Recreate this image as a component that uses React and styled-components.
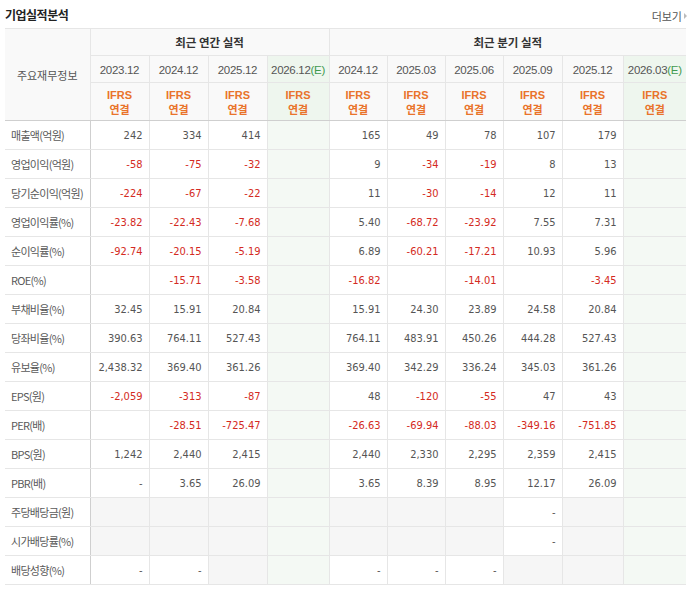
import React from "react";
import styled, { createGlobalStyle, css } from "styled-components";

const Global = createGlobalStyle`
  html, body { margin: 0; padding: 0; background: #fff; }
  body { font-family: "Noto Sans CJK KR", "Liberation Sans", sans-serif; color: #555; }
`;

const Wrap = styled.div`
  width: 696px;
  padding: 0 0 0 5px;
  box-sizing: border-box;
`;

const TitleBar = styled.div`
  display: flex;
  align-items: center;
  justify-content: space-between;
  height: 28px;
  width: 681px;
`;

const Title = styled.h3`
  margin: 0;
  font-size: 12px;
  font-weight: 700;
  color: #222;
  letter-spacing: -0.5px;
`;

const More = styled.a`
  display: flex;
  align-items: center;
  gap: 2px;
  font-size: 11px;
  color: #555;
  text-decoration: none;
  margin-right: -1px;
  margin-top: 3px;
`;

const Arrow = styled.span`
  width: 0;
  height: 0;
  border-left: 3px solid #bbb;
  border-top: 3px solid transparent;
  border-bottom: 3px solid transparent;
`;

const Table = styled.table`
  border-collapse: collapse;
  table-layout: fixed;
  width: 681px;
  border-top: 1px solid #b8b8b8;
  border-bottom: 1px solid #c8c8c8;
`;

const estBg = "#f4f9f4";
const estHeadBg = "#eef6ee";

const HeadCell = styled.th`
  background: ${(p) => (p.$est ? estHeadBg : "#f9f9f9")};
  border: 1px solid #e6e6e6;
  border-left-color: ${(p) => (p.$strongLeft ? "#cfcfcf" : "#e6e6e6")};
  border-bottom-color: ${(p) => (p.$bottomStrong ? "#cfcfcf" : "#e6e6e6")};
  font-weight: ${(p) => (p.$bold ? 700 : 400)};
  font-size: ${(p) => (p.$bold ? "11.5px" : "11px")};
  color: ${(p) => (p.$bold ? "#333" : "#555")};
  text-align: center;
  padding: 0;
  height: ${(p) => p.$h}px;
  &:first-child { border-left: none; }
  &:last-child { border-right: none; }
`;

const DateText = styled.span`
  font-family: "Liberation Sans", sans-serif;
  font-size: 11.5px;
  color: #555;
  letter-spacing: -0.3px;
`;

const Est = styled.span`
  color: #3f9a4f;
`;

const IfrsLine = styled.div`
  font-family: ${(p) =>
    p.$latin ? `"Liberation Sans", sans-serif` : `"Noto Sans CJK KR", "Liberation Sans", sans-serif`};
  font-size: 11px;
  line-height: 14px;
  height: 14px;
  font-weight: 700;
  color: #e9732a;
`;

const Row = styled.tr`
  ${(p) =>
    p.$sep &&
    css`
      & > td { border-top: 1px solid #c8c8c8; }
    `}
`;

const Label = styled.td`
  border-bottom: 1px solid #e6e6e6;
  border-right: 1px solid #cfcfcf;
  height: 28px;
  padding: 0 0 0 6px;
  font-size: 11px;
  color: #5a5a5a;
  white-space: nowrap;
  letter-spacing: -0.7px;
`;

const Cell = styled.td`
  border: 1px solid #e6e6e6;
  border-left-color: ${(p) => (p.$strongLeft ? "#cfcfcf" : "#e6e6e6")};
  background: ${(p) => (p.$est ? estBg : p.$empty ? "#f6f6f6" : "#fff")};
  height: 28px;
  padding: 0 6px 0 0;
  text-align: right;
  font-family: "DejaVu Sans Condensed", "DejaVu Sans", sans-serif;
  font-size: 11px;
  color: ${(p) => (p.$neg ? "#d42a22" : "#555")};
  white-space: nowrap;
  &:last-child { border-right: none; }
`;

const annual = [
  { d: "2023.12" },
  { d: "2024.12" },
  { d: "2025.12" },
  { d: "2026.12", e: true },
];
const quarter = [
  { d: "2024.12" },
  { d: "2025.03" },
  { d: "2025.06" },
  { d: "2025.09" },
  { d: "2025.12" },
  { d: "2026.03", e: true },
];

const widths = [85, 59, 59, 59, 62, 58, 58, 58, 59, 61, 63];

const G = null; // no-data (gray)

const rows = [
  ["매출액(억원)", ["242", "334", "414"], ["165", "49", "78", "107", "179"]],
  ["영업이익(억원)", ["-58", "-75", "-32"], ["9", "-34", "-19", "8", "13"]],
  ["당기순이익(억원)", ["-224", "-67", "-22"], ["11", "-30", "-14", "12", "11"]],
  ["영업이익률(%)", ["-23.82", "-22.43", "-7.68"], ["5.40", "-68.72", "-23.92", "7.55", "7.31"], true],
  ["순이익률(%)", ["-92.74", "-20.15", "-5.19"], ["6.89", "-60.21", "-17.21", "10.93", "5.96"]],
  ["ROE(%)", ["", "-15.71", "-3.58"], ["-16.82", "", "-14.01", "", "-3.45"]],
  ["부채비율(%)", ["32.45", "15.91", "20.84"], ["15.91", "24.30", "23.89", "24.58", "20.84"], true],
  ["당좌비율(%)", ["390.63", "764.11", "527.43"], ["764.11", "483.91", "450.26", "444.28", "527.43"]],
  ["유보율(%)", ["2,438.32", "369.40", "361.26"], ["369.40", "342.29", "336.24", "345.03", "361.26"]],
  ["EPS(원)", ["-2,059", "-313", "-87"], ["48", "-120", "-55", "47", "43"], true],
  ["PER(배)", ["", "-28.51", "-725.47"], ["-26.63", "-69.94", "-88.03", "-349.16", "-751.85"]],
  ["BPS(원)", ["1,242", "2,440", "2,415"], ["2,440", "2,330", "2,295", "2,359", "2,415"]],
  ["PBR(배)", ["-", "3.65", "26.09"], ["3.65", "8.39", "8.95", "12.17", "26.09"]],
  ["주당배당금(원)", [G, G, G], [G, G, G, "-", G], true],
  ["시가배당률(%)", [G, G, G], [G, G, G, "-", G]],
  ["배당성향(%)", ["-", "-", G], ["-", "-", "-", G, G]],
];

function Value({ v, strongLeft, est }) {
  const empty = v === null;
  const neg = typeof v === "string" && v.startsWith("-") && v.length > 1;
  return (
    <Cell $strongLeft={strongLeft} $est={est} $empty={empty} $neg={neg}>
      {empty ? "" : v}
    </Cell>
  );
}

function DateHead({ d, e, strongLeft }) {
  return (
    <HeadCell $h={26} $est={e} $strongLeft={strongLeft}>
      <DateText>
        {d}
        {e && <Est>(E)</Est>}
      </DateText>
    </HeadCell>
  );
}

export default function App() {
  const cols = [...annual, ...quarter];
  return (
    <>
      <Global />
      <Wrap>
        <TitleBar>
          <Title>기업실적분석</Title>
          <More href="#">
            더보기
            <Arrow />
          </More>
        </TitleBar>
        <Table>
          <colgroup>
            {widths.map((w, i) => (
              <col key={i} style={{ width: w }} />
            ))}
          </colgroup>
          <thead>
            <tr>
              <HeadCell rowSpan={3} $h={26} $bottomStrong>
                주요재무정보
              </HeadCell>
              <HeadCell colSpan={4} $bold $h={26} $strongLeft>
                최근 연간 실적
              </HeadCell>
              <HeadCell colSpan={6} $bold $h={26} $strongLeft>
                최근 분기 실적
              </HeadCell>
            </tr>
            <tr>
              {cols.map((c, i) => (
                <DateHead key={i} d={c.d} e={c.e} strongLeft={i === 0 || i === 4} />
              ))}
            </tr>
            <tr>
              {cols.map((c, i) => (
                <HeadCell
                  key={i}
                  $h={37}
                  $est={c.e}
                  $strongLeft={i === 0 || i === 4}
                  $bottomStrong
                >
                  <IfrsLine $latin>IFRS</IfrsLine>
                  <IfrsLine>연결</IfrsLine>
                </HeadCell>
              ))}
            </tr>
          </thead>
          <tbody>
            {rows.map(([label, a, q, sep], r) => (
              <Row key={r} $sep={sep}>
                <Label>{label}</Label>
                {a.map((v, i) => (
                  <Value key={"a" + i} v={v} />
                ))}
                <Value v="" est />
                {q.map((v, i) => (
                  <Value key={"q" + i} v={v} strongLeft={i === 0} />
                ))}
                <Value v="" est />
              </Row>
            ))}
          </tbody>
        </Table>
      </Wrap>
    </>
  );
}
